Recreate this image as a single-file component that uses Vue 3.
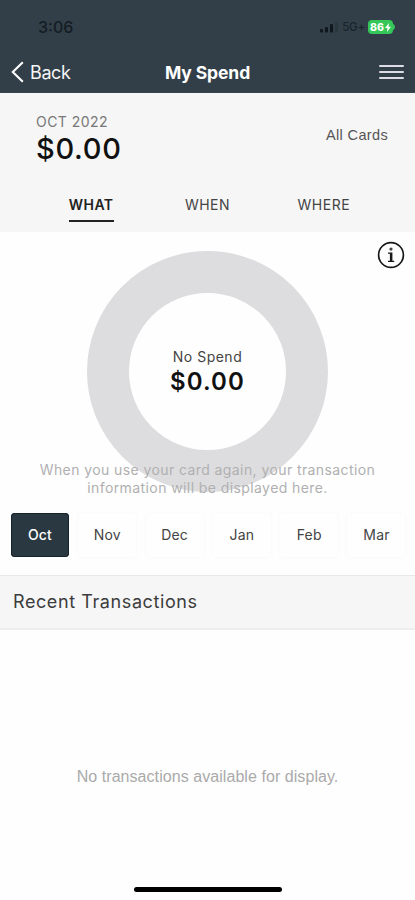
<script setup>
import { ref } from 'vue'

const tabs = ['WHAT', 'WHEN', 'WHERE']
const months = ['Oct', 'Nov', 'Dec', 'Jan', 'Feb', 'Mar']
const activeTab = ref('WHAT')
const activeMonth = ref('Oct')
</script>

<template>
  <div class="screen">
    <header class="top">
      <div class="status">
        <span class="time">3:06</span>
        <div class="indicators">
          <svg class="signal" width="18" height="12" viewBox="0 0 18 12">
            <rect x="0" y="8" width="3" height="3.5" rx="1" />
            <rect x="5" y="6" width="3" height="5.5" rx="1" />
            <rect x="10" y="3" width="3" height="8.5" rx="1" />
            <rect x="15" y="1" width="3" height="10.5" rx="1" opacity="0.2" />
          </svg>
          <span class="network">5G+</span>
          <span class="battery">
            <span>86</span>
            <svg width="6" height="9" viewBox="0 0 6 9"><path d="M4 0 0 5h2.4L2 9l4-5.2H3.5z" fill="#fff" /></svg>
          </span>
          <svg class="nub" width="2" height="6" viewBox="0 0 2 6"><path d="M0 0c2.6 1 2.6 5 0 6z" fill="#35c759" /></svg>
        </div>
      </div>
      <nav class="navbar">
        <button class="back">
          <svg width="13" height="22" viewBox="0 0 13 22"><path d="M11.8 1.2 1.8 11l10 9.8" fill="none" stroke="#fff" stroke-width="2.1" /></svg>
          <span>Back</span>
        </button>
        <h1>My Spend</h1>
        <button class="menu" aria-label="Menu"><i></i><i></i><i></i></button>
      </nav>
    </header>

    <section class="summary">
      <div class="summary-row">
        <div>
          <div class="period">OCT 2022</div>
          <div class="total">$0.00</div>
        </div>
        <span class="cards">All Cards</span>
      </div>
      <div class="tabs">
        <button v-for="t in tabs" :key="t" class="tab" :class="{ active: t === activeTab }" @click="activeTab = t">
          <span>{{ t }}</span>
        </button>
      </div>
    </section>

    <section class="chart">
      <div class="ring">
        <span class="ring-label">No Spend</span>
        <span class="ring-value">$0.00</span>
      </div>
      <svg class="info" width="28" height="28" viewBox="0 0 28 28">
        <circle cx="14" cy="14" r="12.4" fill="none" stroke="#171717" stroke-width="1.7" />
        <circle cx="14" cy="8.1" r="1.6" fill="#444" />
        <path d="M11 11.5h4.4v8.3h1.8v1.2h-6.2v-1.2h1.9v-7.1H11z" fill="#171717" />
      </svg>
      <p class="hint">
        When you use your card again, your transaction<br />
        information will be displayed here.
      </p>
    </section>

    <div class="months">
      <button v-for="m in months" :key="m" class="month" :class="{ active: m === activeMonth }" @click="activeMonth = m">{{ m }}</button>
    </div>

    <h2 class="recent">Recent Transactions</h2>
    <div class="empty">No transactions available for display.</div>
    <div class="home"></div>
  </div>
</template>

<style>
body {
  margin: 0;
  background: #fefefe;
}
</style>

<style scoped>
.screen {
  width: 415px;
  height: 900px;
  display: flex;
  flex-direction: column;
  overflow: hidden;
  background: #fefefe;
  font-family: Inter, "Liberation Sans", sans-serif;
  color: #333;
}
button {
  border: 0;
  padding: 0;
  background: none;
  font: inherit;
  color: inherit;
}
.top {
  flex: none;
  height: 93px;
  box-sizing: border-box;
  background: #323f48;
  border-bottom: 1px solid #39464e;
}
.status {
  height: 54px;
  padding: 0 20px 0 38px;
  display: flex;
  align-items: center;
  justify-content: space-between;
}
.time {
  font-size: 16px;
  font-weight: 500;
  letter-spacing: 0;
  color: #141c23;
}
.indicators {
  display: flex;
  align-items: center;
}
.signal {
  fill: #10181f;
}
.network {
  margin: 0 3px 0 4px;
  font-size: 11.5px;
  font-weight: 500;
  letter-spacing: -0.2px;
  color: #1a242b;
}
.battery {
  width: 25px;
  height: 14px;
  border-radius: 4px;
  background: #35c759;
  display: flex;
  align-items: center;
  justify-content: center;
  gap: 1px;
  font-size: 10.5px;
  font-weight: 800;
  color: #fff;
}
.navbar {
  height: 36px;
  padding: 0 11px;
  display: grid;
  grid-template-columns: 1fr auto 1fr;
  align-items: center;
}
.back {
  display: flex;
  align-items: center;
  gap: 6px;
  font-size: 18px;
  letter-spacing: -0.4px;
  color: #f4f5f6;
}
h1 {
  margin: 0;
  font-size: 17.5px;
  font-weight: 700;
  letter-spacing: -0.1px;
  color: #fff;
}
.menu {
  justify-self: end;
  width: 25px;
  display: flex;
  flex-direction: column;
  gap: 4px;
}
.menu i {
  height: 2px;
  border-radius: 1px;
  background: #dcdce4;
}
.summary {
  flex: none;
  height: 139px;
  background: #f6f6f6;
}
.summary-row {
  height: 91px;
  box-sizing: border-box;
  padding: 20px 27px 0 36px;
  display: flex;
  justify-content: space-between;
}
.period {
  font-size: 14px;
  line-height: 18px;
  letter-spacing: 0.45px;
  color: #777;
}
.total {
  font-size: 29px;
  line-height: 36px;
  font-weight: 500;
  letter-spacing: 0.7px;
  color: #111;
}
.cards {
  padding-top: 13px;
  font-family: "Liberation Sans", sans-serif;
  font-size: 14.5px;
  line-height: 18px;
  letter-spacing: 0.35px;
  color: #555;
}
.tabs {
  height: 38px;
  padding: 0 33px;
  display: grid;
  grid-template-columns: repeat(3, 1fr);
}
.tab {
  display: flex;
  justify-content: center;
  font-size: 14px;
  color: #444;
}
.tab span {
  height: 38px;
  box-sizing: border-box;
  padding-top: 12px;
  line-height: 18px;
  letter-spacing: 0.5px;
}
.tab.active span {
  font-weight: 600;
  color: #222;
  border-bottom: 2px solid #222;
}
.chart {
  position: relative;
  flex: none;
  height: 281px;
  padding-top: 19px;
  box-sizing: border-box;
}
.ring {
  width: 241px;
  height: 241px;
  margin: 0 auto;
  box-sizing: border-box;
  border: 42px solid #dddddf;
  border-radius: 50%;
  display: flex;
  flex-direction: column;
  align-items: center;
  justify-content: center;
}
.ring-label {
  font-size: 14px;
  line-height: 20px;
  letter-spacing: 0.5px;
  color: #444;
}
.ring-value {
  font-size: 24px;
  line-height: 30px;
  font-weight: 600;
  letter-spacing: 1.1px;
  color: #111;
}
.info {
  position: absolute;
  top: 9px;
  right: 10px;
}
.hint {
  position: absolute;
  left: 0;
  right: 0;
  top: 229px;
  margin: 0;
  text-align: center;
  font-size: 14px;
  line-height: 18px;
  letter-spacing: 0.41px;
  white-space: nowrap;
  color: #b0b0b1;
}
.months {
  flex: none;
  height: 62px;
  box-sizing: border-box;
  padding: 0 0 0 11px;
  display: flex;
  gap: 9.3px;
}
.month {
  flex: none;
  width: 58px;
  height: 44px;
  padding-bottom: 1px;
  border-radius: 4px;
  font-size: 14px;
  letter-spacing: 0.2px;
  color: #444;
  box-shadow: 0 0 3px rgba(0, 0, 0, 0.04);
}
.month.active {
  background: #2a3841;
  color: #fff;
  font-weight: 500;
  box-shadow: inset 0 0 0 1px #17232b;
}
.recent {
  flex: none;
  height: 55px;
  box-sizing: border-box;
  margin: 0;
  padding-left: 13px;
  background: #f6f6f6;
  border-top: 1px solid #e8e8e8;
  border-bottom: 2px solid #eeeeee;
  font-size: 18px;
  line-height: 52px;
  font-weight: 400;
  letter-spacing: 0.59px;
  color: #3c3c3c;
}
.empty {
  flex: none;
  height: 257px;
  padding-top: 138px;
  box-sizing: border-box;
  text-align: center;
  font-family: "Liberation Sans", sans-serif;
  font-size: 16px;
  line-height: 18px;
  letter-spacing: 0.06px;
  color: #aaa;
}
.home {
  flex: none;
  width: 148px;
  height: 5px;
  margin: 0 auto;
  border-radius: 3px;
  background: #000;
}
</style>
